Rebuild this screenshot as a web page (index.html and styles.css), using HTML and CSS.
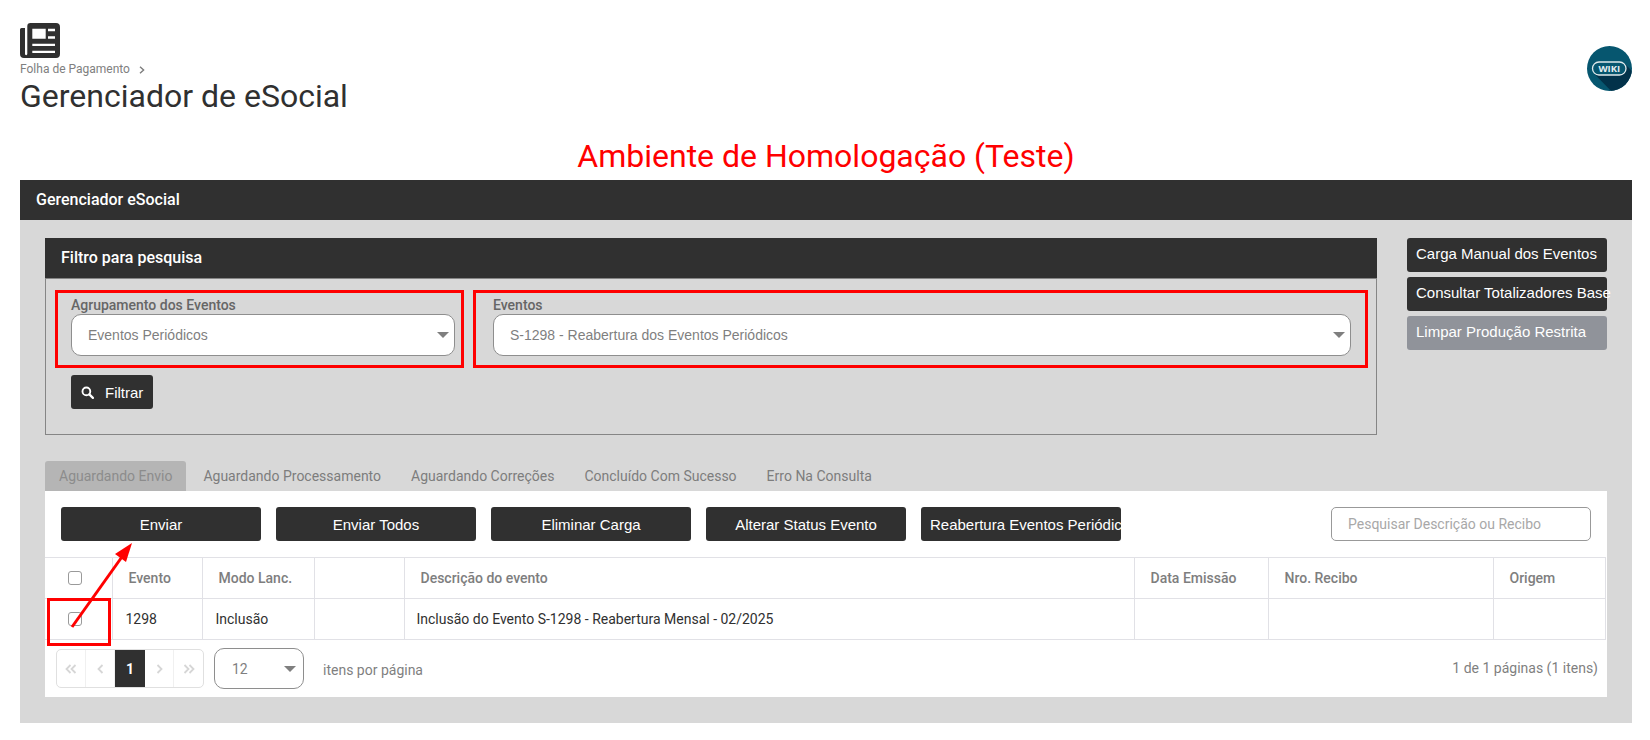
FILE: index.html
```html
<!DOCTYPE html>
<html lang="pt-BR">
<head>
<meta charset="utf-8">
<title>Gerenciador de eSocial</title>
<link rel="stylesheet" href="styles.css">
</head>
<body>
<header class="page-head">
  <div class="head-left">
    <svg class="news-icon" viewBox="0 0 40 35" width="40" height="35" aria-hidden="true">
      <path fill="#303030" fill-rule="evenodd" d="M10.5 0H36a4 4 0 0 1 4 4V31a4 4 0 0 1-4 4H4a4 4 0 0 1-4-4V6.5A1.5 1.5 0 0 1 1.5 5H5V31a1.15 1.15 0 0 0 2.3 0V3.2A3.2 3.2 0 0 1 10.5 0ZM12.3 5.7V15.7H25.7V5.7ZM28 5.7V8.3H35V5.7ZM28 13.3V15.7H35V13.3ZM12.3 20.7V23H35V20.7ZM12.3 27.7V30H35V27.7Z"/>
    </svg>
    <div class="crumb"><span>Folha de Pagamento</span>
      <svg class="crumb-sep" viewBox="0 0 6 8" width="6" height="8" aria-hidden="true"><path d="M1 .8L4.6 4L1 7.2" fill="none" stroke="#7d7d7d" stroke-width="1.4"/></svg>
    </div>
    <h1 class="page-title">Gerenciador de eSocial</h1>
  </div>
  <svg class="wiki" viewBox="0 0 45 45" width="45" height="45" role="img" aria-label="Wiki">
    <defs><clipPath id="wikiclip"><circle cx="22.5" cy="22.5" r="22.5"/></clipPath></defs>
    <circle cx="22.5" cy="22.5" r="22.5" fill="#06566f"/>
    <path clip-path="url(#wikiclip)" fill="#02324a" d="M7 27.5L38 18L50 30V50H29Z"/>
    <rect x="5.5" y="16" width="33.5" height="13" rx="6.5" fill="#06566f" stroke="#dfe9ec" stroke-width="1.3"/>
    <text x="22.3" y="26" class="wiki-text">WIKI</text>
  </svg>
</header>

<h2 class="env-title">Ambiente de Homologação (Teste)</h2>

<main class="panel">
  <div class="panel-bar">Gerenciador eSocial</div>
  <div class="panel-body">
    <div class="top-row">
      <section class="filter">
        <div class="filter-bar">Filtro para pesquisa</div>
        <div class="filter-body">
          <div class="fields">
            <div class="field">
              <label class="field-label">Agrupamento dos Eventos</label>
              <div class="select"><span>Eventos Periódicos</span><i class="caret"></i></div>
            </div>
            <div class="field">
              <label class="field-label">Eventos</label>
              <div class="select"><span>S-1298 - Reabertura dos Eventos Periódicos</span><i class="caret"></i></div>
            </div>
          </div>
          <button class="btn btn-filter">
            <svg viewBox="0 0 14 14" width="13" height="13" aria-hidden="true"><circle cx="5.8" cy="5.8" r="4.2" fill="none" stroke="#fff" stroke-width="2"/><path d="M9 9l3.8 3.8" stroke="#fff" stroke-width="2.4" stroke-linecap="round"/></svg>
            <span>Filtrar</span>
          </button>
        </div>
      </section>
      <aside class="side-actions">
        <button class="btn side-btn">Carga Manual dos Eventos</button>
        <button class="btn side-btn">Consultar Totalizadores Base</button>
        <button class="btn side-btn side-off">Limpar Produção Restrita</button>
      </aside>
    </div>

    <nav class="tabs">
      <span class="tab tab-on">Aguardando Envio</span>
      <span class="tab">Aguardando Processamento</span>
      <span class="tab">Aguardando Correções</span>
      <span class="tab">Concluído Com Sucesso</span>
      <span class="tab">Erro Na Consulta</span>
    </nav>

    <section class="card">
      <div class="toolbar">
        <button class="btn act">Enviar</button>
        <button class="btn act">Enviar Todos</button>
        <button class="btn act">Eliminar Carga</button>
        <button class="btn act">Alterar Status Evento</button>
        <button class="btn act act-clip">Reabertura Eventos Periódicos</button>
        <div class="search">Pesquisar Descrição ou Recibo</div>
      </div>
      <table class="grid">
        <colgroup>
          <col class="c1"><col class="c2"><col class="c3"><col class="c4"><col class="c5"><col class="c6"><col class="c7"><col class="c8">
        </colgroup>
        <thead>
          <tr>
            <th class="chk"><span class="box"></span></th>
            <th>Evento</th><th>Modo Lanc.</th><th></th><th>Descrição do evento</th><th>Data Emissão</th><th>Nro. Recibo</th><th>Origem</th>
          </tr>
        </thead>
        <tbody>
          <tr>
            <td class="chk"><span class="box"></span></td>
            <td class="short">1298</td><td class="short">Inclusão</td><td></td><td>Inclusão do Evento S-1298 - Reabertura Mensal - 02/2025</td><td></td><td></td><td></td>
          </tr>
        </tbody>
      </table>
      <div class="pager">
        <div class="pages">
          <span class="pg"><svg viewBox="0 0 12 10" width="12" height="10" aria-hidden="true"><path d="M5.5 1L1.5 5l4 4M10.5 1l-4 4l4 4" class="chev"/></svg></span>
          <span class="pg"><svg viewBox="0 0 7 10" width="7" height="10" aria-hidden="true"><path d="M5.5 1L1.5 5l4 4" class="chev"/></svg></span>
          <span class="pg pg-on">1</span>
          <span class="pg"><svg viewBox="0 0 7 10" width="7" height="10" aria-hidden="true"><path d="M1.5 1L5.5 5l-4 4" class="chev"/></svg></span>
          <span class="pg pg-last"><svg viewBox="0 0 12 10" width="12" height="10" aria-hidden="true"><path d="M1.5 1L5.5 5l-4 4M6.5 1l4 4l-4 4" class="chev"/></svg></span>
        </div>
        <div class="size"><span>12</span><i class="caret"></i></div>
        <span class="per">itens por página</span>
        <span class="count">1 de 1 páginas (1 itens)</span>
      </div>
    </section>
  </div>
</main>

<div class="mark mark-a"></div>
<div class="mark mark-b"></div>
<div class="mark mark-c"></div>
<svg class="arrow" viewBox="0 0 70 95" width="70" height="95" aria-hidden="true">
  <path d="M7 87L59 14" stroke="#f00" stroke-width="3" fill="none"/>
  <path d="M67 3L61 22L50 14Z" fill="#f00"/>
</svg>
</body>
</html>
```
FILE: styles.css
```css
* { box-sizing: border-box; }
html, body { margin: 0; padding: 0; }
body {
  padding: 0 18px 0 20px;
  background: #fff;
  font-family: Roboto, "Liberation Sans", sans-serif;
  color: #303030;
  position: relative;
  height: 740px;
  overflow: hidden;
}
.page-head { display: flex; justify-content: space-between; align-items: flex-start; padding-top: 23px; height: 130px; }
.news-icon { display: block; }
.crumb { display: flex; align-items: center; gap: 9px; font-size: 12px; line-height: 16px; color: #808080; margin-top: 3px; }
.crumb-sep { display: block; margin-top: 1px; }
.page-title { margin: 0; font-weight: 400; font-size: 32px; line-height: 38px; color: #303030; }
.wiki { margin-top: 23px; display: block; }
.wiki-text { font: 700 9.5px "Open Sans", sans-serif; fill: #e6eef1; text-anchor: middle; }
.env-title { margin: 0; height: 50px; padding-top: 7px; text-align: center; font-weight: 400; font-size: 32px; line-height: 38px; color: #f00; }
.panel { background: #d8d8d8; height: 543px; }
.panel-bar { height: 40px; background: #303030; color: #fff; font-weight: 500; font-size: 16px; line-height: 40px; padding-left: 16px; }
.panel-body { padding: 18px 25px 0; }
.top-row { display: flex; gap: 30px; align-items: flex-start; }
.filter { width: 1332px; }
.filter-bar { height: 40px; background: #303030; color: #fff; font-weight: 500; font-size: 16px; line-height: 40px; padding-left: 16px; }
.filter-body { height: 157px; border: 1px solid #858585; padding: 0 0 0 25px; }
.fields { display: grid; grid-template-columns: 384px 858px; column-gap: 38px; }
.field-label { display: block; font-weight: 500; font-size: 14px; line-height: 18px; color: #666; margin-top: 17px; }
.select { height: 42px; background: #fff; border: 1px solid #8e8e8e; border-radius: 10px; display: flex; align-items: center; justify-content: space-between; padding: 0 5px 0 16px; font-family: "Liberation Sans", sans-serif; font-size: 14px; color: #7f7f7f; }
.caret { width: 0; height: 0; border-left: 6px solid transparent; border-right: 6px solid transparent; border-top: 6px solid #7f7f7f; display: block; }
.btn { border: 0; border-radius: 3px; background: #303030; color: #fff; font-family: "Liberation Sans", sans-serif; font-size: 15px; height: 34px; padding: 0; overflow: hidden; white-space: nowrap; }
.btn-filter { width: 82px; margin-top: 19px; display: flex; align-items: center; gap: 11px; padding-left: 10px; }
.side-actions { display: flex; flex-direction: column; gap: 5px; width: 200px; }
.side-btn { width: 200px; text-align: left; padding: 0 0 3px 9px; overflow: visible; }
.side-off { background: #90939a; }
.tabs { display: flex; gap: 2px; margin-top: 26px; height: 30px; }
.tab { padding: 0 14px; font-size: 14px; line-height: 30px; color: #7d7d7d; }
.tab-on { background: #b5b5b5; color: #8c8c8c; border-radius: 3px 3px 0 0; margin-right: 1px; }
.card { background: #fff; height: 206px; }
.toolbar { display: flex; gap: 15px; padding: 16px; align-items: center; height: 66px; }
.act { width: 200px; }
.act-clip { padding: 0 9px; text-align: left; }
.search { margin-left: auto; width: 260px; height: 34px; border: 1px solid #999; border-radius: 5px; padding-left: 16px; font-size: 14px; line-height: 32px; color: #a8a8a8; }
.grid { width: 1560px; table-layout: fixed; border-collapse: collapse; }
.c1 { width: 67px; } .c2 { width: 90px; } .c3 { width: 112px; } .c4 { width: 90px; }
.c5 { width: 730px; } .c6 { width: 134px; } .c7 { width: 225px; } .c8 { width: 112px; }
.grid th, .grid td { height: 41px; padding: 0 0 0 12px; border: 1px solid #e1e1e6; font-size: 14px; text-align: left; }
.grid th { padding-left: 16px; font-weight: 500; color: #7e7e7e; }
.grid td { font-weight: 400; color: #303030; }
.grid td.short { padding-left: 13px; }
.grid th.chk, .grid td.chk { border-left: 0; padding-left: 23px; }
.box { display: block; width: 14px; height: 14px; border: 1px solid #9a9a9a; border-radius: 3px; background: #fff; }
.pager { display: flex; align-items: center; padding: 8px 9px 0 11px; }
.pages { display: flex; height: 39px; width: 148px; border: 1px solid #e0e0e0; border-radius: 5px; overflow: hidden; }
.pg { width: 29px; display: flex; align-items: center; justify-content: center; border-right: 1px solid #f0f0f0; }
.pg-last { border-right: 0; }
.pg-on { width: 30px; background: #303030; color: #fff; font: 700 14px Roboto, sans-serif; border-right: 0; }
.chev { fill: none; stroke: #d6d6d6; stroke-width: 1.8; }
.size { margin-left: 10px; width: 90px; height: 41px; border: 1px solid #8e8e8e; border-radius: 10px; display: flex; align-items: center; justify-content: space-between; padding: 0 7px 0 17px; font-size: 14px; color: #7f7f7f; }
.per { margin-left: 19px; margin-top: 3px; font-size: 14px; color: #7f7f7f; }
.count { margin-left: auto; margin-top: -2px; font-size: 14px; color: #7f7f7f; }
.mark { position: absolute; border: 3px solid #f00; }
.mark-a { left: 55px; top: 290px; width: 409px; height: 78px; }
.mark-b { left: 473px; top: 290px; width: 895px; height: 78px; }
.mark-c { left: 47px; top: 598px; width: 64px; height: 48px; }
.arrow { position: absolute; left: 65px; top: 540px; }
```
